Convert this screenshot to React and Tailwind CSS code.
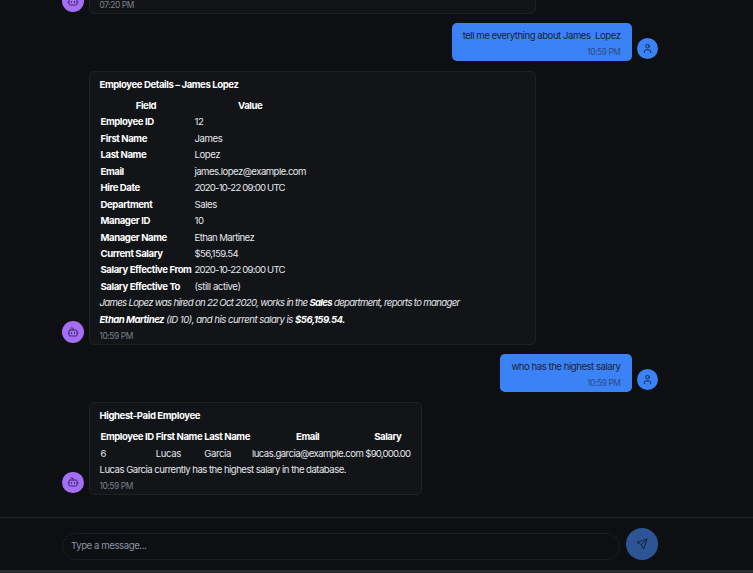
import { Bot, User, Send } from "lucide-react";

function BotAvatar() {
    return (
        <div className="w-[21.5px] h-[21.5px] shrink-0 rounded-full bg-[#a56ff5] flex items-center justify-center">
            <Bot size={12} strokeWidth={2} className="text-[#3f2a6b]" />
        </div>
    );
}

function UserMessage({ text, time }) {
    return (
        <div className="flex justify-end items-end gap-[5.5px]">
            <div className="rounded-[5px] bg-[#3b82f6] px-[11px] pt-[5px] pb-[1px] text-[#1a2233] tracking-[-0.47px]">
                <p className="whitespace-pre leading-[16px]">{text}</p>
                <p className="text-right text-[8.4px] tracking-[-0.42px] leading-[16px] text-[#2a4a85]">{time}</p>
            </div>
            <div className="w-[21px] h-[21px] mb-[2px] shrink-0 rounded-full bg-[#3b82f6] flex items-center justify-center">
                <User size={11} strokeWidth={2} className="text-[#14213d]" />
            </div>
        </div>
    );
}

function BotMessage({ width, time, children }) {
    return (
        <div className="flex items-end gap-[5px]">
            <div className="mb-[2px]">
                <BotAvatar />
            </div>
            <div className={`${width} rounded-[5px] border border-[#1f2126] bg-[#131418] px-[10px] pt-[5px] text-[#e5e7eb]`}>
                {children}
                <p className="text-[8.4px] leading-[16px] text-[#7b8290]">{time}</p>
            </div>
        </div>
    );
}

const details = [
    ["Employee ID", "12"],
    ["First Name", "James"],
    ["Last Name", "Lopez"],
    ["Email", "james.lopez@example.com", "tracking-[-0.55px]"],
    ["Hire Date", "2020-10-22 09:00 UTC", "tracking-[-0.8px]"],
    ["Department", "Sales"],
    ["Manager ID", "10"],
    ["Manager Name", "Ethan Martinez", "tracking-[-0.6px]"],
    ["Current Salary", "$56,159.54", "tracking-[-0.6px]"],
    ["Salary Effective From", "2020-10-22 09:00 UTC", "tracking-[-0.8px]"],
    ["Salary Effective To", "(still active)"],
];

export default function App() {
    return (
        <div className="h-[573px] w-[753px] overflow-hidden flex flex-col bg-[#0e0f12] text-[9.6px] font-['Inter',sans-serif] tracking-[-0.42px]">
            <div className="h-[517px] shrink-0 overflow-hidden flex flex-col justify-end gap-[9.5px] pl-[62px] pr-[95px] pb-[22px]">
                <BotMessage width="w-[447px]" time="07:20 PM">
                    <p className="leading-[16.4px]">&nbsp;</p>
                </BotMessage>

                <UserMessage text="tell me everything about James  Lopez" time="10:59 PM" />

                <BotMessage width="w-[447px]" time="10:59 PM">
                    <p className="font-bold text-white leading-[16.4px] mb-[5px]">Employee Details – James Lopez</p>
                    <table className="leading-[16.45px]">
                        <thead>
                            <tr>
                                <th className="pl-[1px] pr-[2px] font-bold text-white text-center">Field</th>
                                <th className="px-[1px] font-bold text-white text-center">Value</th>
                            </tr>
                        </thead>
                        <tbody>
                            {details.map(([field, value, spacing]) => (
                                <tr key={field}>
                                    <td className="pl-[1px] pr-[2px] font-bold text-white">{field}</td>
                                    <td className={`px-[1px] ${spacing || ""}`}>{value}</td>
                                </tr>
                            ))}
                        </tbody>
                    </table>
                    <p className="italic leading-[16.2px]">
                        <span className="tracking-[-0.68px]">
                            James Lopez was hired on 22 Oct 2020, works in the <b className="text-white">Sales</b> department, reports to manager
                        </span>
                        <br />
                        <span className="tracking-[-0.52px]">
                            <b className="text-white">Ethan Martinez</b> (ID 10), and his current salary is <b className="text-white">$56,159.54.</b>
                        </span>
                    </p>
                </BotMessage>

                <UserMessage text="who has the highest salary" time="10:59 PM" />

                <BotMessage width="w-[333px]" time="10:59 PM">
                    <p className="font-bold text-white leading-[16.4px] mb-[5px]">Highest-Paid Employee</p>
                    <table className="leading-[16.4px] whitespace-nowrap">
                        <thead>
                            <tr>
                                <th className="px-[1px] font-bold text-white">Employee ID</th>
                                <th className="px-[1px] font-bold text-white">First Name</th>
                                <th className="px-[1px] font-bold text-white">Last Name</th>
                                <th className="px-[1px] font-bold text-white">Email</th>
                                <th className="px-[1px] font-bold text-white">Salary</th>
                            </tr>
                        </thead>
                        <tbody>
                            <tr>
                                <td className="px-[1px]">6</td>
                                <td className="px-[1px]">Lucas</td>
                                <td className="px-[1px]">Garcia</td>
                                <td className="px-[1px] tracking-[-0.55px]">lucas.garcia@example.com</td>
                                <td className="px-[1px] tracking-[-0.8px]">$90,000.00</td>
                            </tr>
                        </tbody>
                    </table>
                    <p className="leading-[16px] tracking-[-0.53px]">Lucas Garcia currently has the highest salary in the database.</p>
                </BotMessage>
            </div>

            <div className="flex-1 border-t border-[#23252a] pl-[62px] pt-[10px] flex items-start gap-[6px]">
                <div className="w-[558px] h-[27px] mt-[5px] rounded-full border border-[#1c1e22] bg-[#0e0f12] flex items-center px-[8px] text-[#8a93a3]">
                    Type a message...
                </div>
                <div className="w-[32px] h-[32px] rounded-full bg-[#2d5596] flex items-center justify-center">
                    <Send size={12} strokeWidth={2} className="text-[#14213d]" />
                </div>
            </div>
            <div className="h-[3px] shrink-0 bg-[#2b2c2f]" />
        </div>
    );
}
